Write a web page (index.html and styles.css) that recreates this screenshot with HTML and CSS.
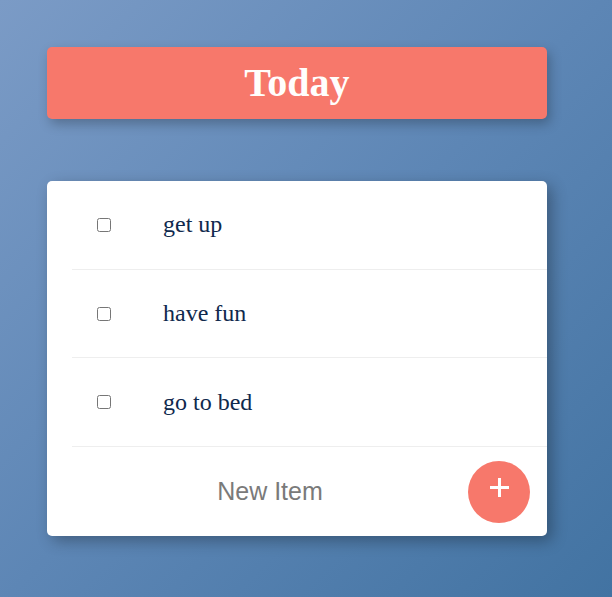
FILE: index.html
```html
<!DOCTYPE html>
<html>
<head>
<meta charset="utf-8">
<link rel="stylesheet" href="styles.css">
</head>
<body>
<div class="wrap">
  <div class="heading"><h1>Today</h1></div>
  <div class="card">
    <div class="item"><input type="checkbox" class="check"><p>get up</p></div>
    <div class="item"><input type="checkbox" class="check"><p>have fun</p></div>
    <div class="item"><input type="checkbox" class="check"><p>go to bed</p></div>
    <form class="new">
      <input type="text" class="new-input" placeholder="New Item">
      <button type="button" class="add" aria-label="Add">
        <svg class="plus" width="19" height="19" viewBox="0 0 19 19"><rect x="0" y="8" width="19" height="3" fill="#fff"/><rect x="8" y="0" width="3" height="19" fill="#fff"/></svg>
      </button>
    </form>
  </div>
</div>
</body>
</html>
```
FILE: styles.css
```css
html, body {
  margin: 0;
  height: 100%;
}
body {
  background: linear-gradient(135deg, #7b9bc6 0%, #5d86b5 50%, #4273a2 100%);
  font-family: "Liberation Serif", serif;
  overflow: hidden;
}
.wrap {
  width: 500px;
  margin: 47px 0 0 47px;
}
.heading {
  height: 72px;
  background: #f7786b;
  border-radius: 5px;
  box-shadow: 3px 5px 12px rgba(0, 0, 0, 0.25);
  display: flex;
  align-items: center;
  justify-content: center;
}
.heading h1 {
  margin: 0;
  color: #fffefc;
  font-size: 40px;
  font-weight: bold;
  line-height: 1;
}
.card {
  margin-top: 62px;
  background: #fff;
  border-radius: 5px;
  box-shadow: 5px 5px 15px rgba(0, 0, 0, 0.3);
}
.item {
  height: 87.7px;
  margin-left: 25px;
  border-bottom: 1px solid #eeeeee;
  display: flex;
  align-items: center;
}
.check {
  margin: 0 0 0 25px;
  width: 14px;
  height: 14px;
}
.item p {
  margin: 0 0 0 52px;
  font-size: 24px;
  color: #10294d;
}
.new {
  height: 89px;
  margin: 0 0 0 25px;
  display: flex;
  align-items: center;
}
.new-input {
  flex: 1;
  border: none;
  outline: none;
  text-align: center;
  font-family: "Liberation Sans", Arial, sans-serif;
  font-size: 25px;
  color: #333;
  background: transparent;
  padding: 0;
  height: 40px;
}
.new-input::placeholder {
  color: #7a7a7a;
}
.add {
  width: 62px;
  height: 62px;
  border-radius: 50%;
  border: none;
  background: #f7786b;
  padding: 0 0 8px;
  margin-right: 17px;
  display: flex;
  align-items: center;
  justify-content: center;
}
.plus {
  display: block;
}
```
